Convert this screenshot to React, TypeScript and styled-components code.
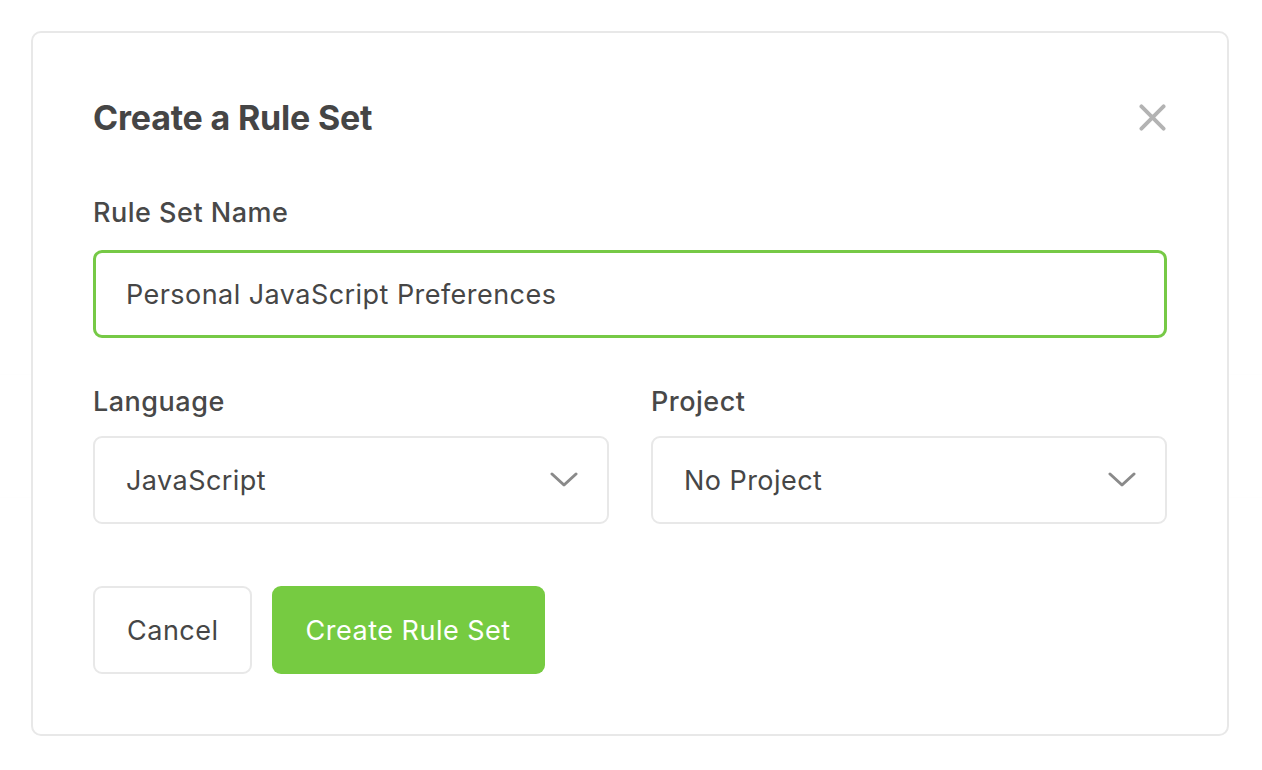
import styled, { createGlobalStyle } from "styled-components";

const GlobalStyle = createGlobalStyle`
  html, body {
    margin: 0;
    padding: 0;
    background: #ffffff;
    font-family: "Inter", "Noto Sans", sans-serif;
  }
  * {
    box-sizing: border-box;
  }
`;

const Page = styled.div`
  width: 1262px;
  height: 770px;
  position: relative;
  overflow: hidden;
  background: #ffffff;
`;

/* faint page content showing through the white overlay */
const Backdrop = styled.div`
  display: flex;
  flex-direction: column;
  padding-top: 374px;
`;

const GhostRule = styled.div<{ $gap: number }>`
  margin-top: ${(p) => p.$gap}px;
  height: 1px;
  background: #f3f3f3;
`;

const Overlay = styled.div`
  position: absolute;
  inset: 0;
  padding: 31px 33px 34px 31px;
  background: rgba(255, 255, 255, 0.9);
`;

const Modal = styled.div`
  width: 1198px;
  background: #ffffff;
  border: 2px solid #e8e8e8;
  border-radius: 10px;
  padding: 60px;
  display: flex;
  flex-direction: column;
`;

const Header = styled.div`
  display: flex;
  align-items: center;
  justify-content: space-between;
  height: 48px;
`;

const Title = styled.h2`
  margin: 0;
  font-size: 34px;
  font-weight: 700;
  color: #454545;
  letter-spacing: -0.2px;
`;

const CloseButton = styled.button`
  border: none;
  background: none;
  padding: 0;
  width: 30px;
  height: 30px;
  display: flex;
  align-items: center;
  justify-content: center;
  cursor: pointer;
`;

const Field = styled.div<{ $top: number }>`
  display: flex;
  flex-direction: column;
  margin-top: ${(p) => p.$top}px;
  flex: 1;
`;

const Label = styled.label<{ $gap: number }>`
  font-size: 27px;
  font-weight: 500;
  line-height: 32px;
  letter-spacing: 0.5px;
  color: #484848;
  margin-bottom: ${(p) => p.$gap}px;
`;

const TextInput = styled.div`
  height: 88px;
  border: 3px solid #76c946;
  border-radius: 9px;
  display: flex;
  align-items: center;
  padding: 0 30px;
  font-size: 27px;
  letter-spacing: 0.45px;
  color: #464646;
`;

const Row = styled.div`
  display: flex;
  gap: 42px;
`;

const Select = styled.div`
  height: 88px;
  border: 2px solid #e8e8e8;
  border-radius: 9px;
  display: flex;
  align-items: center;
  justify-content: space-between;
  padding: 0 29px 0 31px;
  font-size: 27px;
  letter-spacing: 0.45px;
  color: #464646;
`;

const Actions = styled.div`
  display: flex;
  gap: 20px;
  margin-top: 62px;
`;

const Button = styled.button<{ $primary?: boolean }>`
  height: 88px;
  padding: ${(p) => (p.$primary ? "0 34px" : "0 31px 0 32px")};
  border-radius: 9px;
  font-family: "Inter", "Noto Sans", sans-serif;
  font-size: 27px;
  font-weight: 400;
  letter-spacing: 0.5px;
  border: ${(p) => (p.$primary ? "none" : "2px solid #e8e8e8")};
  background: ${(p) => (p.$primary ? "#76cb41" : "#ffffff")};
  color: ${(p) => (p.$primary ? "#ffffff" : "#464646")};
  cursor: pointer;
`;

const Chevron = () => (
  <svg width="28" height="18" viewBox="0 0 28 18" fill="none">
    <path
      d="M2 3 L14 14 L26 3"
      stroke="#8a8a8a"
      strokeWidth="3"
      strokeLinecap="round"
      strokeLinejoin="round"
    />
  </svg>
);

const CloseIcon = () => (
  <svg width="27" height="27" viewBox="0 0 28 28" fill="none">
    <path
      d="M2.5 2.5 L25.5 25.5 M25.5 2.5 L2.5 25.5"
      stroke="#b3b3b3"
      strokeWidth="4"
      strokeLinecap="round"
    />
  </svg>
);

export default function App() {
  return (
    <Page>
      <GlobalStyle />
      <Backdrop>
        <GhostRule $gap={0} />
        <GhostRule $gap={122} />
      </Backdrop>
      <Overlay>
        <Modal>
          <Header>
            <Title>Create a Rule Set</Title>
            <CloseButton aria-label="Close">
              <CloseIcon />
            </CloseButton>
          </Header>

          <Field $top={56}>
            <Label $gap={21}>Rule Set Name</Label>
            <TextInput>Personal JavaScript Preferences</TextInput>
          </Field>

          <Row>
            <Field $top={48}>
              <Label $gap={18}>Language</Label>
              <Select>
                JavaScript
                <Chevron />
              </Select>
            </Field>
            <Field $top={48}>
              <Label $gap={18}>Project</Label>
              <Select>
                No Project
                <Chevron />
              </Select>
            </Field>
          </Row>

          <Actions>
            <Button>Cancel</Button>
            <Button $primary>Create Rule Set</Button>
          </Actions>
        </Modal>
      </Overlay>
    </Page>
  );
}
